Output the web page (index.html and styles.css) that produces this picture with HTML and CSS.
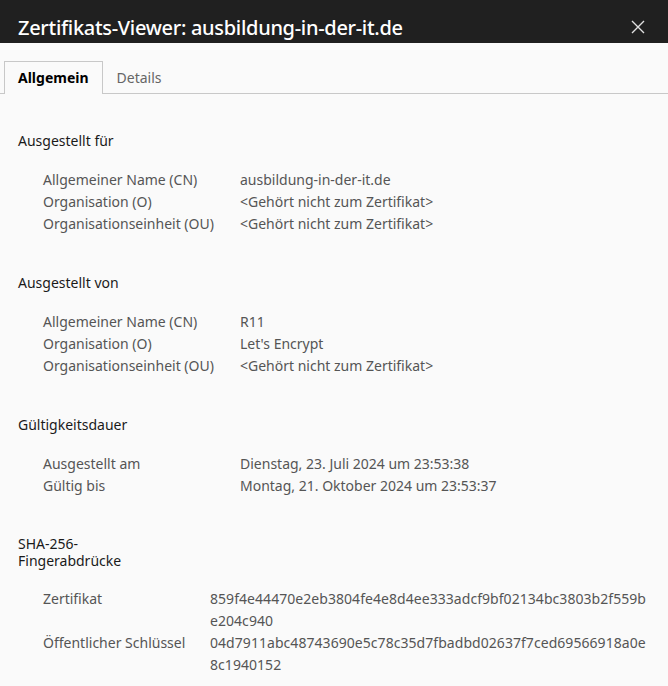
FILE: index.html
```html
<!DOCTYPE html>
<html lang="de">
<head>
    <meta charset="UTF-8">
    <title>Zertifikats-Viewer</title>
    <link rel="stylesheet" href="styles.css">
</head>
<body>
    <div class="title-bar">
        <h1>Zertifikats-Viewer: ausbildung-in-der-it.de</h1>
        <svg class="close" width="14" height="14" viewBox="0 0 14 14">
            <path d="M1 1 L13 13 M13 1 L1 13" stroke="#e0e0e0" stroke-width="1.4" fill="none"/>
        </svg>
    </div>

    <div class="tabs">
        <div class="tab active">Allgemein</div>
        <div class="tab">Details</div>
    </div>

    <div class="content">
        <div class="section">
            <h2>Ausgestellt für</h2>
            <div class="rows">
                <div class="label">Allgemeiner Name (CN)</div><div class="value">ausbildung-in-der-it.de</div>
                <div class="label">Organisation (O)</div><div class="value">&lt;Gehört nicht zum Zertifikat&gt;</div>
                <div class="label">Organisationseinheit (OU)</div><div class="value">&lt;Gehört nicht zum Zertifikat&gt;</div>
            </div>
        </div>

        <div class="section">
            <h2>Ausgestellt von</h2>
            <div class="rows">
                <div class="label">Allgemeiner Name (CN)</div><div class="value">R11</div>
                <div class="label">Organisation (O)</div><div class="value">Let's Encrypt</div>
                <div class="label">Organisationseinheit (OU)</div><div class="value">&lt;Gehört nicht zum Zertifikat&gt;</div>
            </div>
        </div>

        <div class="section">
            <h2>Gültigkeitsdauer</h2>
            <div class="rows">
                <div class="label">Ausgestellt am</div><div class="value">Dienstag, 23. Juli 2024 um 23:53:38</div>
                <div class="label">Gültig bis</div><div class="value">Montag, 21. Oktober 2024 um 23:53:37</div>
            </div>
        </div>

        <div class="section">
            <h2 class="narrow">SHA-256-Fingerabdrücke</h2>
            <div class="rows hashes">
                <div class="label">Zertifikat</div><div class="value">859f4e44470e2eb3804fe4e8d4ee333adcf9bf02134bc3803b2f559b<br>e204c940</div>
                <div class="label">Öffentlicher Schlüssel</div><div class="value">04d7911abc48743690e5c78c35d7fbadbd02637f7ced69566918a0e<br>8c1940152</div>
            </div>
        </div>
    </div>
</body>
</html>
```

FILE: styles.css
```css
body {
    margin: 0;
    background-color: #fafafa;
    font-family: "Noto Sans", "Open Sans", sans-serif;
    color: #1a1a1a;
}

.title-bar {
    background-color: #202020;
    height: 43px;
    display: flex;
    align-items: flex-end;
    justify-content: space-between;
    padding: 0 23px 0 18px;
}

.title-bar h1 {
    margin: 0 0 1px 0;
    color: #ffffff;
    font-size: 20px;
    font-weight: 500;
    letter-spacing: -0.3px;
    line-height: 28px;
}

.close {
    align-self: flex-start;
    margin-top: 20px;
}

.tabs {
    display: flex;
    margin-top: 18px;
    padding-left: 4px;
    border-bottom: 1px solid #c8c8c8;
}

.tab {
    font-size: 14px;
    color: #666666;
    padding: 6px 13px 6px 13px;
    line-height: 19px;
    border: 1px solid transparent;
    border-bottom: none;
}

.tab.active {
    color: #000000;
    font-weight: 700;
    border-color: #c8c8c8;
    background-color: #fafafa;
    margin-bottom: -1px;
}

.content {
    padding: 37px 18px 0 18px;
}

.section {
    margin-bottom: 38px;
}

h2 {
    margin: 0 0 18px 0;
    font-size: 14px;
    font-weight: 400;
    line-height: 20px;
    color: #1a1a1a;
}

h2.narrow {
    width: 90px;
    line-height: 17px;
    margin-top: 2px;
    margin-bottom: 19px;
}

.rows {
    display: grid;
    grid-template-columns: 197px 1fr;
    padding-left: 25px;
    font-size: 14px;
    line-height: 22px;
    color: #555555;
}

.rows.hashes {
    grid-template-columns: 167px 1fr;
}

.hashes .value {
    letter-spacing: 0.05px;
}
```
